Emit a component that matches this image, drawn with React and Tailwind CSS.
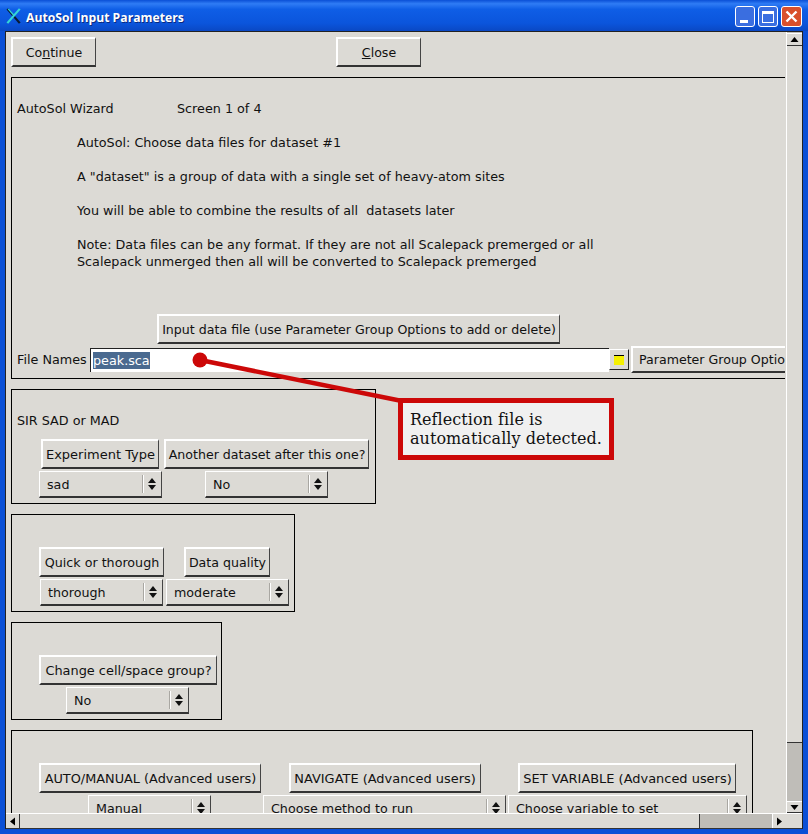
const UI = '[font-family:"DejaVu_Sans",sans-serif]'

function Btn({ children, className = "" }) {
  return (
    <div className={`h-[30px] shrink-0 flex items-center justify-center whitespace-nowrap bg-[#dcdad5] border border-t-[2px] border-l-[2px] border-t-white border-l-white border-r-[#444] border-b-[2px] border-b-[#333] text-[12.6px] leading-[17px] text-[#111] ${className}`}>
      {children}
    </div>
  )
}

function Spinner({ value, className = "" }) {
  return (
    <div className={`h-[27px] shrink-0 flex bg-[#dcdad5] border border-t-white border-l-white border-r-[#444] border-b-[2px] border-b-[#333] text-[12.7px] leading-[17px] text-[#111] ${className}`}>
      <div className="flex-1 pl-[7px] flex items-center whitespace-nowrap overflow-hidden">{value}</div>
      <div className="w-[19px] my-[3px] border-l border-l-[#a9a7a2] flex flex-col items-center justify-center gap-[2px] shadow-[inset_1px_0_0_#fff]">
        <svg width="8" height="5" viewBox="0 0 8 5"><path d="M4 0 L8 5 H0 Z" fill="#111" /></svg>
        <svg width="8" height="5" viewBox="0 0 8 5"><path d="M4 5 L8 0 H0 Z" fill="#111" /></svg>
      </div>
    </div>
  )
}

function Panel({ children, className = "" }) {
  return <div className={`ml-[5px] mt-[10px] border border-black shrink-0 text-[12.75px] leading-[17px] text-[#111] ${className}`}>{children}</div>
}

function Arrow({ d }) {
  return <svg width="9" height="9" viewBox="0 0 9 9"><path d={d} fill="#000" /></svg>
}

function TitleBar() {
  return (
    <div className="h-[31px] shrink-0 flex items-start pl-[6px] pr-[6px] bg-[linear-gradient(#0a4fd6_0%,#2f7cf5_12%,#0f5ee6_30%,#0b55dc_75%,#0a48c4_100%)]">
      <svg width="16" height="16" viewBox="0 0 17 18" className="shrink-0 mt-[8px]">
        <path d="M1 1 L15 17" stroke="#0a1a30" strokeWidth="2.5" />
        <path d="M15 1 L1 17" stroke="#35d6d6" strokeWidth="2.5" />
        <path d="M2 1 L9 9" stroke="#35d6d6" strokeWidth="1.5" />
      </svg>
      <span className="ml-[4px] mt-[9px] text-[12.2px] leading-[18px] font-bold text-white [font-family:'Open_Sans',sans-serif] [text-shadow:1px_1px_0_#0a2a80]">AutoSol Input Parameters</span>
      <div className="ml-auto mt-[6px] flex gap-[3px]">
        <div className="w-[20px] h-[21px] rounded-[3px] border border-white bg-[#3a6ee0] flex items-end pl-[4px] pb-[3px]">
          <div className="w-[8px] h-[3px] bg-white" />
        </div>
        <div className="w-[20px] h-[21px] rounded-[3px] border border-white bg-[#3a6ee0] flex items-center justify-center">
          <div className="w-[12px] h-[12px] border border-white border-t-[3px]" />
        </div>
        <div className="w-[21px] h-[21px] rounded-[3px] border border-white bg-[#d9502c] flex items-center justify-center">
          <svg width="13" height="13" viewBox="0 0 13 13"><path d="M1.5 1.5 L11.5 11.5 M11.5 1.5 L1.5 11.5" stroke="#fff" strokeWidth="2.4" /></svg>
        </div>
      </div>
    </div>
  )
}

export default function App() {
  return (
    <div className={`relative w-[808px] h-[834px] overflow-hidden flex flex-col bg-[#0a4fd6] ${UI}`}>
      <TitleBar />
      <div className="flex-1 min-h-0 mx-[5px] mb-[5px] flex flex-col bg-[#dcdad5] border-l border-l-[#222] border-t border-t-[#222] border-r border-r-[#222]">
        <div className="flex-1 min-h-0 flex">
          <div className="w-[780px] overflow-hidden flex flex-col">
            <div className="flex pl-[5px] pt-[5px] shrink-0">
              <Btn className="w-[85px]"><span>Co<u>n</u>tinue</span></Btn>
              <Btn className="w-[85px] ml-[240px]"><span><u>C</u>lose</span></Btn>
            </div>

            <div className="ml-[5px] mt-[10px] w-[780px] shrink-0 border border-r-0 border-black pt-[22px] h-[302px] text-[12.75px] leading-[17px] text-[#111]">
              <div className="flex pl-[5px]">
                <span className="w-[160px]">AutoSol Wizard</span>
                <span>Screen 1 of 4</span>
              </div>
              <div className="pl-[65px] mt-[17px]">AutoSol: Choose data files for dataset #1</div>
              <div className="pl-[65px] mt-[17px]">A "dataset" is a group of data with a single set of heavy-atom sites</div>
              <div className="pl-[65px] mt-[17px] whitespace-pre">You will be able to combine the results of all  datasets later</div>
              <div className="pl-[65px] mt-[17px]">Note: Data files can be any format. If they are not all Scalepack premerged or all</div>
              <div className="pl-[65px]">Scalepack unmerged then all will be converted to Scalepack premerged</div>
              <div className="mt-[44px] pl-[145px]">
                <Btn className="w-[403px]">Input data file (use Parameter Group Options to add or delete)</Btn>
              </div>
              <div className="flex items-center pl-[5px] mt-[2px]">
                <span className="w-[73px] whitespace-nowrap">File Names</span>
                <div className="w-[519px] h-[24px] bg-white border-t border-l border-[#222] flex items-center pl-[2px]">
                  <span className="bg-[#4a6a90] text-white leading-[17px]">peak.sca</span>
                </div>
                <div className="w-[20px] h-[21px] border border-t-white border-l-white border-r-[#222] border-b-[#222] flex items-center justify-center">
                  <div className="w-[10px] h-[10px] bg-[#f5f000] border-t border-t-black" />
                </div>
                <Btn className="ml-[2px] w-[160px] !h-[27px] !justify-start pl-[6px] overflow-hidden">Parameter Group Options</Btn>
              </div>
            </div>

            <Panel className="w-[365px] h-[115px] pt-[22px]">
              <div className="pl-[5px]">SIR SAD or MAD</div>
              <div className="flex gap-[2px] pl-[27px] mt-[10px]">
                <div className="w-[123px] flex flex-col items-center gap-[2px]">
                  <Btn className="w-[118px] mr-[1px] !text-[13px]">Experiment Type</Btn>
                  <Spinner value="sad" className="w-[123px]" />
                </div>
                <div className="w-[205px] flex flex-col items-center gap-[2px]">
                  <Btn className="w-[205px]">Another dataset after this one?</Btn>
                  <Spinner value="No" className="w-[123px]" />
                </div>
              </div>
            </Panel>

            <Panel className="w-[284px] h-[98px] pt-[32px]">
              <div className="flex gap-[2px] pl-[27px]">
                <div className="w-[125px] flex flex-col items-center gap-[2px]">
                  <Btn className="w-[125px] !text-[12.7px]">Quick or thorough</Btn>
                  <Spinner value="thorough" className="w-[123px]" />
                </div>
                <div className="w-[123px] flex flex-col items-center gap-[2px]">
                  <Btn className="w-[86px] mr-[1px]">Data quality</Btn>
                  <Spinner value="moderate" className="w-[123px]" />
                </div>
              </div>
            </Panel>

            <Panel className="w-[211px] h-[98px] pt-[32px]">
              <div className="pl-[27px] w-[205px] flex flex-col items-center gap-[2px]">
                <Btn className="w-[178px] !text-[12.9px]">Change cell/space group?</Btn>
                <Spinner value="No" className="w-[123px] mr-[1px]" />
              </div>
            </Panel>

            <Panel className="w-[742px] h-[120px] pt-[32px]">
              <div className="flex pl-[27px]">
                <div className="w-[222px] flex flex-col items-center gap-[2px]">
                  <Btn className="w-[222px] !text-[12.85px]">AUTO/MANUAL (Advanced users)</Btn>
                  <Spinner value="Manual" className="w-[123px] mr-[1px]" />
                </div>
                <div className="ml-[2px] w-[243px] flex flex-col items-center gap-[2px]">
                  <Btn className="w-[192px] !text-[12.95px]">NAVIGATE (Advanced users)</Btn>
                  <Spinner value="Choose method to run" className="w-[243px]" />
                </div>
                <div className="ml-[2px] w-[239px] flex flex-col items-center gap-[2px]">
                  <Btn className="w-[218px] mr-[1px] !text-[12.95px]">SET VARIABLE (Advanced users)</Btn>
                  <Spinner value="Choose variable to set" className="w-[239px]" />
                </div>
              </div>
            </Panel>
          </div>

          <div className="ml-[1px] w-[16px] shrink-0 flex flex-col border-l border-l-white bg-[#bfbdb8]">
            <div className="h-[13px] mt-[1px] bg-[#dcdad5] border-t border-t-white border-b border-b-[#333] flex items-center justify-center">
              <Arrow d="M4.5 2 L8.5 7 H.5 Z" />
            </div>
            <div className="h-[697px] bg-[#dcdad5] border-b border-b-[#333]" />
            <div className="flex-1" />
            <div className="h-[12px] bg-[#dcdad5] border-t border-t-white border-b border-b-[#333] flex items-center justify-center">
              <Arrow d="M4.5 7 L8.5 2 H.5 Z" />
            </div>
          </div>
        </div>

        <div className="h-[16px] shrink-0 flex border-t border-t-white border-b border-b-[#333] bg-[#dcdad5]">
          <div className="w-[14px] flex items-center justify-center border-r border-r-[#333]">
            <Arrow d="M2 4.5 L7 .5 V8.5 Z" />
          </div>
          <div className="w-[680px] border-r border-r-[#333]" />
          <div className="w-[72px] bg-[#bfbdb8]" />
          <div className="w-[14px] flex items-center justify-center border-l border-l-white">
            <Arrow d="M7 4.5 L2 .5 V8.5 Z" />
          </div>
        </div>
      </div>

      <svg width="808" height="834" className="absolute left-0 top-0 pointer-events-none">
        <circle cx="200" cy="360" r="7.5" fill="#cc0808" />
        <line x1="200" y1="360" x2="402" y2="401" stroke="#cc0808" strokeWidth="4.5" />
      </svg>
      <div className="absolute left-[398px] top-[398px] w-[216px] h-[62px] border-[5px] border-[#cc0808] bg-[#f0f0f0] pl-[7px] pt-[7px] text-[16px] tracking-[0.05px] leading-[19px] text-[#111] [font-family:'DejaVu_Serif',serif]">
        <div>Reflection file is</div>
        <div>automatically detected.</div>
      </div>
    </div>
  )
}
